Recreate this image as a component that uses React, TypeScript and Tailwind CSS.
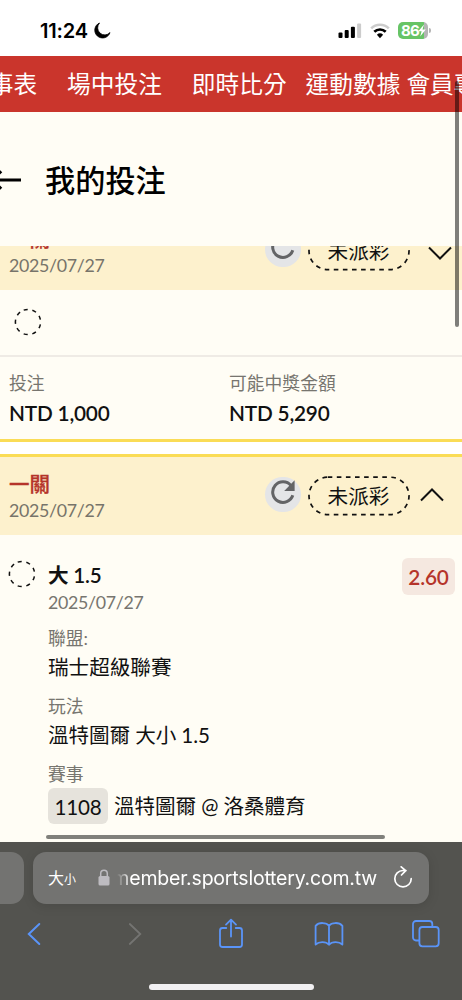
import React from 'react';

const navItems = [
  { label: '賽事表', className: '-ml-[34px] mr-[30px]' },
  { label: '場中投注', className: 'mr-[30px]' },
  { label: '即時比分', className: 'mr-[19px]' },
  { label: '運動數據', className: 'mr-[6px]' },
  { label: '會員專區', className: '' },
];

const StatusBar: React.FC = () => (
  <div className="flex h-[56px] shrink-0 items-center bg-white pl-10 pr-[31px] pt-[5px] font-['Inter',sans-serif]">
    <span className="w-[51px] whitespace-nowrap text-[20px] font-semibold leading-6 tracking-[-0.2px] text-black">11:24</span>
    <svg className="ml-[3px]" width="17" height="17" viewBox="0 0 17 17">
      <path d="M5.5 1 A 7.8 7.8 0 1 0 16 10.6 A 6.8 6.8 0 0 1 5.5 1 Z" fill="#000" stroke="#000" strokeWidth="0.8" strokeLinejoin="round" />
    </svg>
    <svg className="ml-auto" width="24" height="16" viewBox="0 0 24 16">
      <rect x="0.5" y="9.5" width="4" height="5.5" rx="1" fill="#000" />
      <rect x="6.7" y="7" width="4" height="8" rx="1" fill="#000" />
      <rect x="12.9" y="3.8" width="4" height="11.2" rx="1" fill="#000" />
      <rect x="19.1" y="0.6" width="4" height="14.4" rx="1" fill="#ccc" />
    </svg>
    <svg className="ml-[8px]" width="20" height="16" viewBox="0 0 20 16">
      <path d="M1.2 5.4 A 12.6 12.6 0 0 1 18.8 5.4" fill="none" stroke="#ccc" strokeWidth="2.6" />
      <path d="M4.3 8.8 A 8.2 8.2 0 0 1 15.7 8.8" fill="none" stroke="#000" strokeWidth="2.7" />
      <path d="M6.9 11.8 A 4.5 4.5 0 0 1 13.1 11.8 L10 15.2 Z" fill="#000" />
    </svg>
    <div className="ml-[8px] flex h-[17px] w-[30px] items-center overflow-hidden rounded-[5px] bg-gradient-to-r from-[#67c466] from-[86%] to-[#b5b5b5] to-[86%] pl-[3px]">
      <span className="text-[15px] font-bold leading-4 tracking-[-0.8px] text-white">86</span>
      <svg className="-ml-px" width="8" height="13" viewBox="0 0 8 13">
        <path d="M6 0.5 L0.3 7.2 H3.6 L2.2 12.5 L7.8 5.5 H4.5 Z" fill="#fff" />
      </svg>
    </div>
    <div className="ml-px h-[5px] w-[2px] rounded-r-full bg-[#b5b5b5]" />
  </div>
);

const DashedCircle: React.FC = () => (
  <svg width="28" height="28" viewBox="0 0 28 28" className="shrink-0">
    <circle cx="14" cy="14" r="12.6" fill="none" stroke="#111" strokeWidth="1.5" strokeDasharray="4.1 4.7" transform="rotate(-110 14 14)" />
  </svg>
);

const BetHeader: React.FC<{ open: boolean }> = ({ open }) => (
  <div className="flex h-[78px] w-full shrink-0 items-center bg-[#fdf1cd] pl-[9px]">
    <div className="w-[256px] pt-px">
      <p className="h-[27px] text-[20.5px] font-medium leading-[27px] text-[#b5342a] [-webkit-text-stroke:0.3px_#b5342a]">一關</p>
      <p className="h-[24px] text-[17.8px] leading-[24px] tracking-[-0.3px] text-[#77746a]">2025/07/27</p>
    </div>
    <div className="-mt-[3px] flex h-[35px] w-9 items-center justify-center rounded-full bg-[#e4e5e7]">
      <svg width="26" height="26" viewBox="0 0 26 26" className="-mt-[5px]">
        <path d="M21 6.6 A 10.3 10.3 0 1 0 22.8 16.3" fill="none" stroke="#636466" strokeWidth="3" />
        <path d="M24.6 1.2 V12 H14.2 Z" fill="#636466" />
      </svg>
    </div>
    <div className="relative -mt-px ml-[6.5px] flex h-10 w-[102px] items-center justify-center">
      <svg className="absolute inset-0" width="102" height="40" viewBox="0 0 102 40">
        <rect x="1" y="1.2" width="100" height="37.4" rx="18.7" fill="none" stroke="#111" strokeWidth="1.7" strokeDasharray="4.6 4.5" />
      </svg>
      <span className="text-[20.6px] leading-10 text-[#111]">未派彩</span>
    </div>
    <svg className={open ? 'ml-[10px] -mt-[2px]' : 'ml-[18.5px] mt-[3px]'} width="24" height="14" viewBox="0 0 24 14">
      <path d={open ? 'M1 12.5 L12 1.5 L23 12.5' : 'M1 1.5 L12 12.5 L23 1.5'} fill="none" stroke="#111" strokeWidth="2" />
    </svg>
  </div>
);

const Amount: React.FC<{ label: string; value: string }> = ({ label, value }) => (
  <div className="w-[220px]">
    <p className="h-[28px] text-[17.8px] leading-[28px] text-[#77756f]">{label}</p>
    <p className="h-[32px] text-[20.8px] font-semibold leading-[32px] tracking-[-0.2px] text-[#111]">{value}</p>
  </div>
);

const BrowserBar: React.FC = () => (
  <div className="flex h-[158px] shrink-0 flex-col bg-[#53534f] font-['Inter','Noto_Sans_CJK_TC',sans-serif]">
    <div className="flex pt-[10px]">
      <div className="h-[52px] w-[24px] rounded-r-[13px] bg-[#737371]" />
      <div className="ml-[9px] flex h-[52px] w-[396px] items-center rounded-[13px] bg-[#737371] pl-[15px] text-white shadow-[0_2px_12px_rgba(0,0,0,0.12)]">
        <span className="w-[50px] whitespace-nowrap text-[16px]">大<span className="text-[12px]">小</span></span>
        <svg width="12" height="17" viewBox="0 0 12 17" className="-mt-px">
          <path d="M2.7 8 V4.6 a3.3 3.3 0 0 1 6.6 0 V8" fill="none" stroke="#bdbbc0" strokeWidth="1.5" />
          <rect x="0.5" y="7" width="11" height="9.5" rx="1.6" fill="#bdbbc0" />
        </svg>
        <div className="ml-[7px] flex w-[260px] justify-end overflow-hidden [mask-image:linear-gradient(to_right,transparent,black_14px)]">
          <span className="whitespace-nowrap text-[19.5px] leading-7 tracking-[-0.2px]">member.sportslottery.com.tw</span>
        </div>
        <svg className="ml-[15px]" width="22" height="24" viewBox="0 0 22 24">
          <path d="M11 4.5 a8.2 8.2 0 1 0 8.2 8.2 M11 4.5 h3 M9.2 0.8 L13.7 4.6 L9.5 9" fill="none" stroke="#fff" strokeWidth="1.7" strokeLinecap="round" strokeLinejoin="round" />
        </svg>
      </div>
    </div>
    <div className="flex h-[60px] items-center pb-px pl-[27px]">
      <svg width="15" height="24" viewBox="0 0 15 24">
        <path d="M12.3 2 L1.8 12 L12.3 22" fill="none" stroke="#5a94f8" strokeWidth="2" strokeLinecap="round" />
      </svg>
      <svg className="ml-[86px]" width="15" height="24" viewBox="0 0 15 24">
        <path d="M1.8 2 L12.3 12 L1.8 22" fill="none" stroke="#747472" strokeWidth="1.8" strokeLinecap="round" />
      </svg>
      <svg className="-mt-[2px] ml-[75px]" width="26" height="32" viewBox="0 0 26 32">
        <path d="M8.3 11 H4.5 a2.5 2.5 0 0 0 -2.5 2.5 V27.5 a2.5 2.5 0 0 0 2.5 2.5 H21.5 a2.5 2.5 0 0 0 2.5 -2.5 V13.5 a2.5 2.5 0 0 0 -2.5 -2.5 H17.7 M13 19.5 V3 M8 7.6 L13 2.6 L18 7.6" fill="none" stroke="#5a94f8" strokeWidth="1.8" strokeLinecap="round" strokeLinejoin="round" />
      </svg>
      <svg className="ml-[70px]" width="30" height="26" viewBox="0 0 30 26">
        <path d="M15 4.8 C12.5 1.2 4.8 1 1.6 4.8 V23.5 C5 20.2 12 20.2 15 23.7 C18 20.2 25 20.2 28.4 23.5 V4.8 C25.2 1 17.5 1.2 15 4.8 V23.7" fill="none" stroke="#5a94f8" strokeWidth="1.8" strokeLinejoin="round" />
      </svg>
      <svg className="ml-[67px]" width="30" height="30" viewBox="0 0 30 30">
        <path d="M8.5 21.5 H5 a3 3 0 0 1 -3 -3 V5 a3 3 0 0 1 3 -3 H18.3 a3 3 0 0 1 3 3 V8" fill="none" stroke="#5a94f8" strokeWidth="1.8" />
        <rect x="8.4" y="8" width="19.3" height="19.3" rx="3" fill="none" stroke="#5a94f8" strokeWidth="1.8" />
      </svg>
    </div>
    <div className="mx-auto mt-[20px] h-[6px] w-[165px] rounded-full bg-[#f1f0f2]" />
  </div>
);

const App: React.FC = () => {
  return (
    <div className="relative flex h-[1000px] w-[462px] flex-col overflow-hidden bg-[#fffdf5] font-['Lato','Noto_Sans_CJK_TC',sans-serif]">
      <StatusBar />

      <nav className="flex h-[56px] shrink-0 items-center overflow-hidden whitespace-nowrap bg-[#ca352c] pb-px text-[23.7px] leading-8 text-white">
        {navItems.map((item) => (
          <span key={item.label} className={item.className}>
            {item.label}
          </span>
        ))}
      </nav>

      <div className="flex h-[134px] shrink-0 items-center pt-[2px]">
        <svg width="22" height="24" viewBox="0 0 22 24" className="shrink-0">
          <path d="M21 12 H-6 M1.2 3.2 L-7.6 12 L1.2 20.8" fill="none" stroke="#000" strokeWidth="3" />
        </svg>
        <h1 className="ml-[23px] text-[30.2px] font-medium leading-10 text-black">我的投注</h1>
      </div>

      {/* first bet, partly scrolled under the title */}
      <div className="flex h-[44px] shrink-0 flex-col justify-end overflow-hidden">
        <BetHeader open={false} />
      </div>
      <div className="flex h-[67px] shrink-0 items-center border-b-2 border-[#efebe5] pb-px pl-[14px]">
        <DashedCircle />
      </div>
      <div className="flex h-[85px] shrink-0 border-b-[3px] border-[#fadc56] pl-[9px] pt-[12px]">
        <Amount label="投注" value="NTD 1,000" />
        <Amount label="可能中獎金額" value="NTD 5,290" />
      </div>
      <div className="h-[12px] shrink-0 bg-white" />

      {/* second bet */}
      <div className="h-[3px] shrink-0 bg-[#fadc56]" />
      <BetHeader open />
      <div className="flex h-[307px] shrink-0 overflow-hidden pl-2 pr-[7px] pt-[23px]">
        <div className="pt-[2px]">
          <DashedCircle />
        </div>
        <div className="ml-[12px] flex-1 whitespace-nowrap pt-[2px] text-[20.6px] text-[#111]">
          <p className="h-[30px] font-semibold leading-[30px] tracking-[-0.2px]">大 1.5</p>
          <p className="h-[24px] text-[17.8px] leading-[24px] tracking-[-0.3px] text-[#77756f]">2025/07/27</p>
          <p className="mt-[11px] h-[26px] text-[17.8px] leading-[26px] text-[#77756f]">聯盟:</p>
          <p className="h-[32px] leading-[32px]">瑞士超級聯賽</p>
          <p className="mt-[10px] h-[26px] text-[17.8px] leading-[26px] text-[#77756f]">玩法</p>
          <p className="h-[32px] leading-[32px] tracking-[-0.1px]">溫特圖爾 大小 1.5</p>
          <p className="mt-[10px] h-[26px] text-[17.8px] leading-[26px] text-[#77756f]">賽事</p>
          <div className="mt-px flex h-[36px] items-center">
            <span className="flex h-[36px] w-[60px] items-center justify-center rounded-[6px] bg-[#e6e3dc] pt-[2px] tracking-[-0.2px]">1108</span>
            <span className="ml-[6px] tracking-[-0.1px]">溫特圖爾 @ 洛桑體育</span>
          </div>
          <div className="-ml-[2px] mt-[11px] h-[4px] w-[339px] rounded-full bg-[#80807b]" />
        </div>
        <div className="flex h-[37px] w-[53px] items-center justify-center rounded-[6px] bg-[#f5e8e0] text-[20.8px] font-semibold tracking-[-0.2px] text-[#b5342a]">2.60</div>
      </div>

      <BrowserBar />

      <div className="absolute left-[455px] top-[81px] h-[246px] w-[4px] rounded-full bg-black/50" />
    </div>
  );
};

export default App;
